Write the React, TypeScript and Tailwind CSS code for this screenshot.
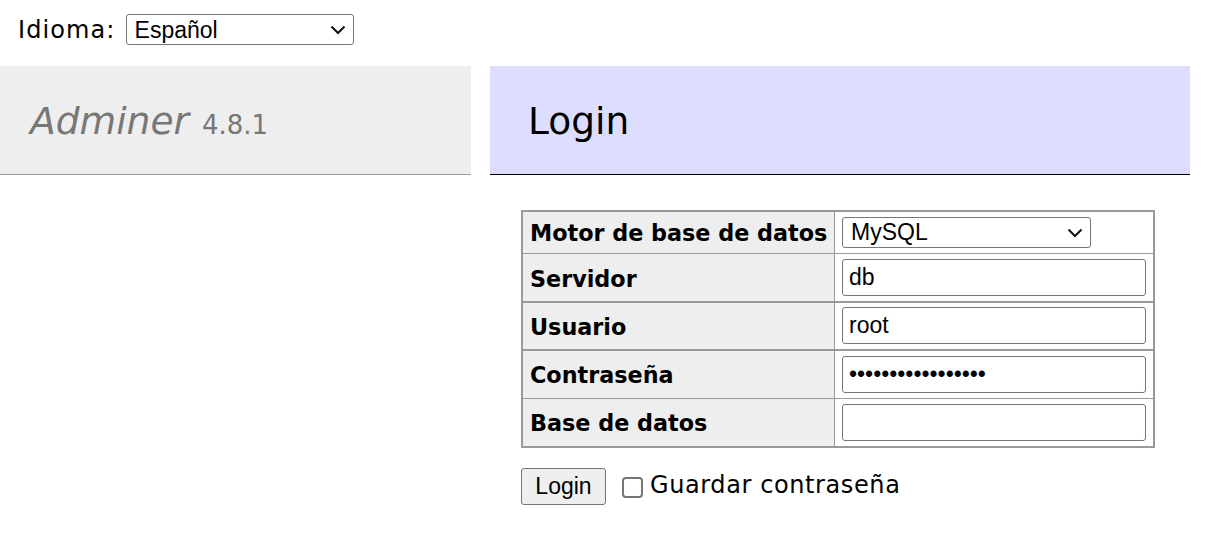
const verdana = "font-['DejaVu_Sans',sans-serif]";
const arial = "font-['Liberation_Sans',Arial,sans-serif]";

function Chevron({ className }: { className: string }) {
  return (
    <svg viewBox="0 0 16 10" fill="none" className={className}>
      <path d="M1.5 1.5 8 8l6.5-6.5" stroke="#111" strokeWidth="2" />
    </svg>
  );
}

function FakeSelect({ value, width, textPad = "" }: { value: string; width: string; textPad?: string }) {
  return (
    <div
      className={`flex h-[31px] items-center justify-between rounded-[3px] border border-[#767676] bg-white pl-2 pr-[7px] text-[23px] text-black ${arial} ${width}`}
    >
      <span className={textPad}>{value}</span>
      <Chevron className="h-[10px] w-[16px]" />
    </div>
  );
}

function Field({ value, textPad }: { value: string; textPad: string }) {
  return (
    <div
      className={`flex h-[37px] w-[304px] items-center rounded-[3px] border border-[#767676] bg-white px-[6px] text-[23px] text-black ${arial} ${textPad}`}
    >
      {value}
    </div>
  );
}

const rows = [
  { label: "Servidor", value: "db", line: "border-b-2", height: "h-[49px]", labelPad: "pt-[4px]", fieldPad: "", textPad: "pb-[1px]" },
  { label: "Usuario", value: "root", line: "border-b-2", height: "h-[48px]", labelPad: "pt-[3px]", fieldPad: "pb-[1px]", textPad: "" },
  { label: "Contraseña", value: "•••••••••••••••••", line: "border-b", height: "h-[48px]", labelPad: "pt-[3px]", fieldPad: "", textPad: "pb-[1px]" },
  { label: "Base de datos", value: "", line: "", height: "h-[47px]", labelPad: "pt-[3px]", fieldPad: "", textPad: "" },
];

export default function App() {
  return (
    <div className={`h-[556px] w-[1232px] overflow-hidden bg-white text-black ${verdana}`}>
      {/* Language */}
      <div className="flex h-[66px] items-start pl-[18px] pt-[14px]">
        <span className="mt-[1px] text-[24px] leading-[30px] tracking-[1.1px]">Idioma:</span>
        <div className="ml-[10px]">
          <FakeSelect value="Español" width="w-[228px]" textPad="pt-[1px]" />
        </div>
      </div>

      <div className="flex items-start gap-[19px]">
        {/* Sidebar */}
        <div className="flex h-[109px] w-[471px] items-center border-b border-[#999] bg-[#eee] pl-[30px] pt-[2px] text-[#777]">
          <span className="text-[37.6px] italic">Adminer</span>
          <span className="ml-[13px] mt-[8px] text-[26px]">4.8.1</span>
        </div>

        {/* Content */}
        <div className="w-[700px]">
          <div className="flex h-[109px] items-center border-b border-black bg-[#ddf] pl-[38px] pt-[2px] text-[37.5px]">
            Login
          </div>

          <div className="ml-[31px] mt-[35px] w-[634px] border-2 border-[#999]">
            <div className="flex h-[42px] border-b border-[#999]">
              <div className="flex w-[312px] items-center whitespace-nowrap border-r border-[#999] bg-[#eee] pl-[7px] pt-[2px] text-[22.3px] font-bold">
                Motor de base de datos
              </div>
              <div className="flex items-center pl-[7px]">
                <FakeSelect value="MySQL" width="w-[249px]" />
              </div>
            </div>
            {rows.map((row) => (
              <div key={row.label} className={`flex ${row.height} border-[#999] ${row.line}`}>
                <div
                  className={`flex w-[312px] items-center whitespace-nowrap border-r border-[#999] bg-[#eee] pl-[7px] text-[22.3px] font-bold ${row.labelPad}`}
                >
                  {row.label}
                </div>
                <div className={`flex items-center pl-[7px] ${row.fieldPad}`}>
                  <Field value={row.value} textPad={row.textPad} />
                </div>
              </div>
            ))}
          </div>

          <div className="ml-[31px] mt-[20px] flex items-center">
            <button
              className={`h-[37px] w-[85px] rounded-[3px] border border-[#767676] bg-[#efefef] text-[23px] ${arial}`}
            >
              Login
            </button>
            <span className="ml-[16px] mt-[2px] h-[21px] w-[21px] rounded-[4px] border-2 border-[#767676] bg-white" />
            <span className="mb-[3px] ml-[7px] text-[24px] leading-[30px] tracking-[0.6px]">Guardar contraseña</span>
          </div>
        </div>
      </div>
    </div>
  );
}
